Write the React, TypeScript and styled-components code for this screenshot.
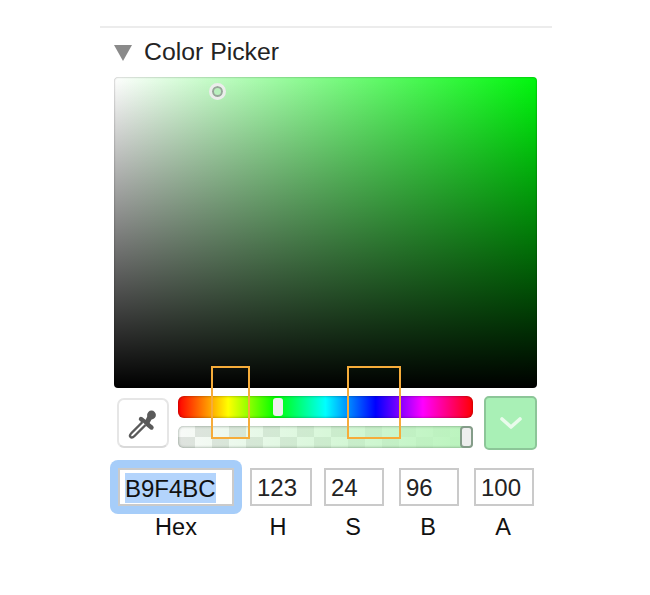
import React from "react";
import styled, { createGlobalStyle } from "styled-components";

const GlobalStyle = createGlobalStyle`
  html, body {
    margin: 0;
    background: #ffffff;
    font-family: "Liberation Sans", Arial, sans-serif;
  }
`;

const Panel = styled.div`
  width: 452px;
  height: 569px;
  margin: 26px 0 0 100px;
  border-top: 2px solid #ececec;
`;

const Header = styled.div`
  display: flex;
  align-items: center;
  gap: 12px;
  height: 49px;
  padding-left: 14px;
`;

const Triangle = styled.div`
  width: 0;
  height: 0;
  border-left: 9.5px solid transparent;
  border-right: 9.5px solid transparent;
  border-top: 16px solid #8a8a8a;
`;

const Title = styled.div`
  font-size: 24.8px;
  line-height: 30px;
  margin-top: -2px;
  color: #232323;
`;

const Picker = styled.div`
  width: 423px;
  margin-left: 14px;
`;

const ColorField = styled.div`
  position: relative;
  height: 311px;
  border-radius: 4px;
  background:
    linear-gradient(to bottom, rgba(0, 0, 0, 0) 0%, #000000 100%),
    linear-gradient(to right, #ffffff 0%, #00f70d 100%);
  box-shadow: inset 0 0 2px rgba(0, 0, 0, 0.45);
`;

const ColorThumb = styled.div`
  position: absolute;
  left: 95px;
  top: 6px;
  width: 17px;
  height: 17px;
  box-sizing: border-box;
  border-radius: 50%;
  border: 3px solid #ececec;
  background: #b9f0be;
  box-shadow: inset 0 0 0 2px #98a59a;
`;

const Controls = styled.div`
  position: relative;
  display: flex;
  align-items: flex-start;
  margin-top: 8px;
`;

const EyeDropperButton = styled.div`
  display: flex;
  align-items: center;
  justify-content: center;
  box-sizing: border-box;
  width: 52px;
  height: 50px;
  margin: 2px 0 0 3px;
  border: 2px solid #e6e6e6;
  border-bottom-color: #d9d9d9;
  border-radius: 7px;
  background: #ffffff;
`;

const Sliders = styled.div`
  display: flex;
  flex-direction: column;
  gap: 8px;
  width: 295px;
  margin-left: 9px;
`;

const HueTrack = styled.div`
  position: relative;
  height: 22px;
  border-radius: 6px;
  background: linear-gradient(
    to right,
    #ff0000 0%,
    #ffff00 17%,
    #00ff00 33%,
    #00ffff 50%,
    #0000ff 67%,
    #ff00ff 83%,
    #ff0000 100%
  );
  box-shadow: inset 0 0 3px rgba(0, 0, 0, 0.4);
`;

const HueThumb = styled.div`
  position: absolute;
  left: 95px;
  top: 2px;
  width: 10px;
  height: 18px;
  border-radius: 3px;
  background: #eeeeee;
`;

const AlphaTrack = styled.div`
  position: relative;
  height: 22px;
  border-radius: 5px;
  background:
    linear-gradient(to right, rgba(185, 244, 188, 0) 0%, #b9f4bc 100%),
    conic-gradient(#dfe3df 25%, #f8faf8 0 50%, #dfe3df 0 75%, #f8faf8 0) 0 0 / 34px 22px;
  box-shadow: inset 0 0 3px rgba(60, 80, 65, 0.6);
`;

const AlphaThumb = styled.div`
  position: absolute;
  right: 0;
  top: 0;
  width: 13px;
  height: 22px;
  box-sizing: border-box;
  border: 2px solid #849c89;
  border-radius: 4px;
  background: #eeeeee;
`;

const Swatch = styled.div`
  display: flex;
  align-items: center;
  justify-content: center;
  box-sizing: border-box;
  width: 53px;
  height: 54px;
  margin-left: 11px;
  border: 2px solid #8cc698;
  border-radius: 5px;
  background: #a9f0b6;
`;

const Marker = styled.div<{ $left: number; $width: number }>`
  position: absolute;
  top: -30px;
  left: ${(p) => p.$left}px;
  width: ${(p) => p.$width}px;
  height: 73px;
  box-sizing: border-box;
  border: 2px solid #f6ac3a;
  pointer-events: none;
`;

const Fields = styled.div`
  display: flex;
  margin: 10px 0 0 -4px;
`;

const Field = styled.div<{ $width: number; $gap: number }>`
  display: flex;
  flex-direction: column;
  align-items: center;
  width: ${(p) => p.$width}px;
  margin-left: ${(p) => p.$gap}px;
`;

const FocusRing = styled.div`
  width: 100%;
  box-sizing: border-box;
  padding: 8px;
  border-radius: 8px;
  background: #a6cdf9;
`;

const ValueBox = styled.div<{ $plain?: boolean }>`
  box-sizing: border-box;
  height: 38px;
  width: 100%;
  padding-left: 5px;
  border: 2px solid #cacaca;
  background: #ffffff;
  font-size: 24px;
  line-height: 35px;
  color: #232323;
  margin-top: ${(p) => (p.$plain ? "8px" : "0")};
`;

const Selected = styled.span`
  display: inline-block;
  height: 30px;
  line-height: 31px;
  vertical-align: top;
  margin-top: 3px;
  background: #b3d4fc;
  color: #111111;
`;

const Label = styled.div<{ $shift?: number }>`
  margin-top: ${(p) => (p.$shift === undefined ? "0" : "8px")};
  font-size: 23.5px;
  line-height: 27px;
  color: #111111;
  transform: translateX(${(p) => p.$shift ?? 0}px);
`;

const DropperIcon = () => (
  <svg width="32" height="32" viewBox="0 0 32 32" fill="none">
    <path d="M14 12 24.5 20.5" stroke="#5a5a5a" strokeWidth="4.4" strokeLinecap="round" />
    <path d="M20 15.5 24 8" stroke="#5a5a5a" strokeWidth="5" />
    <circle cx="24.5" cy="8" r="4.4" fill="#5a5a5a" />
    <path
      d="M15.5 15 4.5 26c-1.7 1.7-2 3-1 4s2.3.7 4-1L18.5 18"
      fill="#ffffff"
      stroke="#5a5a5a"
      strokeWidth="2.4"
      strokeLinejoin="round"
    />
  </svg>
);

const ChevronIcon = () => (
  <svg width="24" height="14" viewBox="0 0 24 14" fill="none">
    <path d="M3 3l9 8 9-8" stroke="#e9fbec" strokeWidth="3.6" strokeLinecap="round" strokeLinejoin="round" />
  </svg>
);

const channels = [
  { name: "H", value: "123", width: 62, gap: 8, shift: -3 },
  { name: "S", value: "24", width: 60, gap: 12, shift: -1 },
  { name: "B", value: "96", width: 60, gap: 15, shift: -1 },
  { name: "A", value: "100", width: 60, gap: 15, shift: -1 },
];

const App: React.FC = () => {
  return (
    <>
      <GlobalStyle />
      <Panel>
        <Header>
          <Triangle />
          <Title>Color Picker</Title>
        </Header>
        <Picker>
          <ColorField>
            <ColorThumb />
          </ColorField>
          <Controls>
            <EyeDropperButton>
              <DropperIcon />
            </EyeDropperButton>
            <Sliders>
              <HueTrack>
                <HueThumb />
              </HueTrack>
              <AlphaTrack>
                <AlphaThumb />
              </AlphaTrack>
            </Sliders>
            <Swatch>
              <ChevronIcon />
            </Swatch>
            <Marker $left={97} $width={39} />
            <Marker $left={233} $width={54} />
          </Controls>
          <Fields>
            <Field $width={132} $gap={0}>
              <FocusRing>
                <ValueBox>
                  <Selected>B9F4BC</Selected>
                </ValueBox>
              </FocusRing>
              <Label>Hex</Label>
            </Field>
            {channels.map((c) => (
              <Field key={c.name} $width={c.width} $gap={c.gap}>
                <ValueBox $plain>{c.value}</ValueBox>
                <Label $shift={c.shift}>{c.name}</Label>
              </Field>
            ))}
          </Fields>
        </Picker>
      </Panel>
    </>
  );
};

export default App;
